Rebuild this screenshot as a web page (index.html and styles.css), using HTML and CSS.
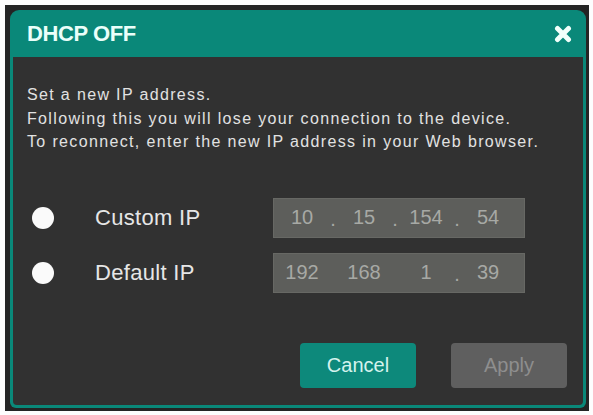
FILE: index.html
```html
<!DOCTYPE html>
<html lang="en">
<head>
  <meta charset="UTF-8" />
  <title>DHCP OFF</title>
  <link rel="stylesheet" href="styles.css">
</head>
<body>
  <div class="frame">
    <div class="dialog">
      <div class="dialog-head">
        <h2>DHCP OFF</h2>
        <button class="close-btn" aria-label="Close">
          <svg width="18" height="18" viewBox="0 0 18 18">
            <path d="M3.5 3.5 L14.5 14.5 M14.5 3.5 L3.5 14.5" stroke="#f2fffb" stroke-width="5" stroke-linecap="round"/>
          </svg>
        </button>
      </div>
      <div class="dialog-body">
        <p class="notice">
          Set a new IP address.<br>
          Following this you will lose your connection to the device.<br>
          To reconnect, enter the new IP address in your Web browser.
        </p>
        <div class="ip-row">
          <span class="radio"></span>
          <span class="ip-label">Custom IP</span>
          <div class="ip-box">
            <span>10</span><i>.</i><span>15</span><i>.</i><span>154</span><i>.</i><span>54</span>
          </div>
        </div>
        <div class="ip-row">
          <span class="radio"></span>
          <span class="ip-label">Default IP</span>
          <div class="ip-box">
            <span>192</span><i></i><span>168</span><i></i><span>1</span><i>.</i><span>39</span>
          </div>
        </div>
        <div class="actions">
          <button class="btn btn-cancel">Cancel</button>
          <button class="btn btn-apply" disabled>Apply</button>
        </div>
      </div>
    </div>
  </div>
</body>
</html>
```

FILE: styles.css
```css
:root {
  --teal: #0a8879;
  --panel: #313131;
  --frame: #242424;
  --field: #5d5e5b;
}
body {
  margin: 0;
  background: #fdfdfd;
  font-family: "Liberation Sans", Arial, sans-serif;
}
.frame {
  width: 584px;
  height: 406px;
  margin: 5px 0 0 5px;
  padding: 5px 3px 3px 5px;
  box-sizing: border-box;
  background: var(--frame);
}
.dialog {
  height: 100%;
  background: var(--teal);
  border-radius: 9px 9px 6px 6px;
  padding: 0 3px 3px;
  box-sizing: border-box;
  display: flex;
  flex-direction: column;
}
.dialog-head {
  height: 47px;
  display: flex;
  align-items: center;
  justify-content: space-between;
  padding: 0 11px 0 14px;
}
.dialog-head h2 {
  margin: 0;
  font-size: 22px;
  letter-spacing: -0.4px;
  font-weight: bold;
  color: #eafffa;
}
.close-btn {
  background: none;
  border: none;
  padding: 0;
  width: 18px;
  height: 18px;
  cursor: pointer;
}
.dialog-body {
  flex: 1;
  background: var(--panel);
  border-radius: 0 0 4px 4px;
  padding: 26px 16px 17px 14px;
  display: flex;
  flex-direction: column;
}
.notice {
  margin: 0 0 44px;
  font-size: 16px;
  line-height: 23.5px;
  letter-spacing: 1.35px;
  color: #e2e2e2;
}
.ip-row {
  display: flex;
  align-items: center;
  padding-left: 5px;
  margin-bottom: 15px;
}
.radio {
  width: 22px;
  height: 22px;
  border-radius: 50%;
  background: #fafafa;
  margin-right: 41px;
}
.ip-label {
  width: 178px;
  font-size: 22px;
  letter-spacing: 0.3px;
  color: #e6e6e6;
}
.ip-box {
  width: 252px;
  height: 40px;
  box-sizing: border-box;
  padding-left: 4px;
  background: var(--field);
  border: 1px solid #676864;
  display: grid;
  grid-template-columns: 48px 14px 48px 14px 48px 14px 48px;
  align-items: center;
  font-size: 20px;
  color: #a7a9a5;
}
.ip-box span {
  text-align: center;
}
.ip-box i {
  font-style: normal;
  text-align: center;
  position: relative;
  top: 2px;
}
.actions {
  margin-top: auto;
  display: flex;
  justify-content: flex-end;
  gap: 35px;
}
.btn {
  width: 116px;
  height: 45px;
  border: none;
  border-radius: 4px;
  font-family: inherit;
  font-size: 20px;
}
.btn-cancel {
  background: #0d897b;
  color: #d4f3ee;
  cursor: pointer;
}
.btn-apply {
  background: #5f5f5f;
  color: #8e8e8e;
}
```
